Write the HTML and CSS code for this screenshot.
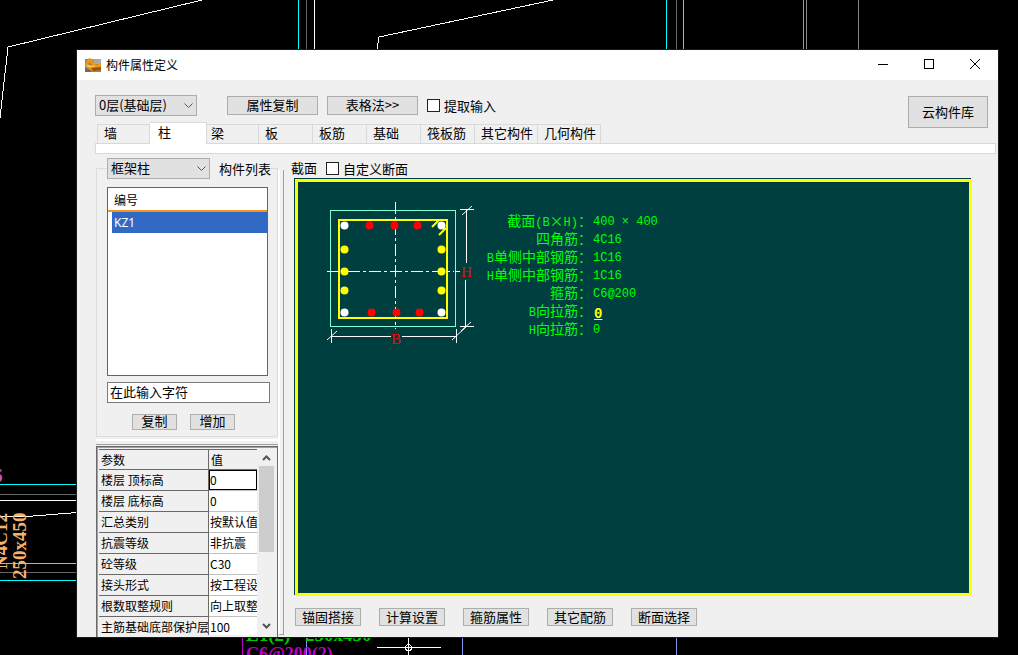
FILE: index.html
```html
<!DOCTYPE html>
<html lang="zh-CN">
<head>
<meta charset="utf-8">
<title>构件属性定义</title>
<link rel="stylesheet" href="styles.css">
</head>
<body>
<div class="desktop">
  <svg class="drawing" aria-hidden="true" shape-rendering="crispEdges" fill="none">
    <g stroke="#fff">
      <polyline points="0,118 8,47 202,0"/>
      <polyline points="377,50 379,37 553,0"/>
      <path d="M314.500 0V50M0 500.500H77M0 516.500H27L77 512.500"/>
    </g>
    <path stroke="#0ff" d="M298.500 0V50M666.500 0V50M683.500 0V50M0 484.500H77M0 563.500H77M0 580.500H77"/>
    <path stroke="#666" d="M306.500 0V50M676.500 0V50M0 494.500H77M0 572.500H77"/>
    <path stroke="#8c8486" d="M806.500 0V50M858.500 0V50"/>
    <path stroke="#7b96ee" d="M803.500 0V50M306.500 637V655M462.500 637V655M676.500 637V655"/>
    <path stroke="#c000c0" d="M242.500 637V655"/>
    <g class="cad-text">
      <text class="orange" transform="translate(7 569) rotate(-90)">N4C12</text>
      <text class="orange" transform="translate(26 579) rotate(-90)">250x450</text>
      <text class="violet" x="-7" y="482">6</text>
      <text class="green" x="246" y="641">L1(2)</text>
      <text class="green" x="305" y="641">250x450</text>
      <text class="magenta" x="246" y="660">C6@200(2)</text>
    </g>
    <path stroke="#fff" d="M377 647.500H441M408.500 637V655"/>
    <circle cx="408.500" cy="647.500" r="3" stroke="#fff"/>
  </svg>

  <main class="dialog">
    <header class="titlebar">
      <svg class="app-icon" viewBox="0 0 16 15" aria-hidden="true">
        <path fill="#85878c" d="M0 1h16v13H0z"/>
        <path fill="#aaa" d="M8 1h8v5H9z"/>
        <path fill="#6d6a68" d="M0 10l6 1v3H0z"/>
        <path fill="#f0960f" d="M4 0l3 1 2 4 2 2 5-2v7l-9 1-5-3-2-3 1-3z"/>
        <path fill="#85878c" d="M3 6l2-2 2 3-3 0z"/>
        <path fill="#9b5508" d="M6 10l10-1v3l-8 1z"/>
        <path fill="#ffd34a" d="M1 7l6 1 4-1-3 2-5 0z"/>
      </svg>
      <h1 class="title">构件属性定义</h1>
      <button class="sys" aria-label="最小化"><svg viewBox="0 0 10 10"><path d="M0 5.500h10"/></svg></button>
      <button class="sys" aria-label="最大化"><svg viewBox="0 0 10 10"><path d="M.5.5h9v9h-9z"/></svg></button>
      <button class="sys" aria-label="关闭"><svg viewBox="0 0 10 10"><path class="smooth" d="M0 0l10 10M10 0L0 10"/></svg></button>
    </header>

    <section class="top">
      <div class="top-left">
        <div class="toolbar">
          <span class="combo floor"><select aria-label="楼层"><option>0层(基础层)</option></select><svg viewBox="0 0 9 5"><path d="M.5.5l4 4 4-4"/></svg></span>
          <span class="tool-buttons">
            <button class="btn wide">属性复制</button>
            <button class="btn wide">表格法&gt;&gt;</button>
            <label class="check"><input type="checkbox">提取输入</label>
          </span>
        </div>
        <nav class="tabs" role="tablist">
          <button class="tab" role="tab">墙</button>
          <button class="tab selected" role="tab" aria-selected="true">柱</button>
          <button class="tab" role="tab">梁</button>
          <button class="tab" role="tab">板</button>
          <button class="tab" role="tab">板筋</button>
          <button class="tab" role="tab">基础</button>
          <button class="tab" role="tab">筏板筋</button>
          <button class="tab long" role="tab">其它构件</button>
          <button class="tab long" role="tab">几何构件</button>
        </nav>
      </div>
      <button class="btn cloud">云构件库</button>
    </section>
    <div class="strip"></div>

    <section class="work">
      <aside class="side">
        <fieldset class="group">
          <legend><span class="combo kind"><select aria-label="柱类型"><option>框架柱</option></select><svg viewBox="0 0 9 5"><path d="M.5.5l4 4 4-4"/></svg></span>构件列表</legend>
          <div class="list" role="listbox" aria-label="构件列表">
            <div class="list-head">编号</div>
            <div class="list-item" role="option" aria-selected="true">KZ1</div>
          </div>
          <input class="search" type="text" value="在此输入字符" aria-label="搜索">
          <div class="list-actions"><button class="btn">复制</button><button class="btn">增加</button></div>
        </fieldset>
        <div class="ridge"></div>
        <div class="params">
          <div class="params-view">
            <table>
              <thead><tr><th>参数</th><th>值</th></tr></thead>
              <tbody>
                <tr><th>楼层 顶标高</th><td class="editing"><input type="text" value="0" aria-label="楼层 顶标高"></td></tr>
                <tr><th>楼层 底标高</th><td>0</td></tr>
                <tr><th>汇总类别</th><td>按默认值</td></tr>
                <tr><th>抗震等级</th><td>非抗震</td></tr>
                <tr><th>砼等级</th><td>C30</td></tr>
                <tr><th>接头形式</th><td>按工程设</td></tr>
                <tr><th>根数取整规则</th><td>向上取整</td></tr>
                <tr><th>主筋基础底部保护层</th><td>100</td></tr>
              </tbody>
            </table>
          </div>
          <div class="scrollbar">
            <svg viewBox="0 0 9 6"><path d="M1 5l3.500-3.500L8 5"/></svg>
            <div class="thumb"></div>
            <svg viewBox="0 0 9 6"><path d="M1 1l3.500 3.500L8 1"/></svg>
          </div>
        </div>
      </aside>
      <div class="splitter"></div>

      <section class="section-pane">
        <div class="pane-head">截面<label class="check"><input type="checkbox">自定义断面</label></div>
        <div class="canvas">
          <svg class="column" viewBox="0 0 160 160" fill="none" aria-hidden="true">
            <g shape-rendering="crispEdges">
              <path stroke="#7fffd4" d="M10.500 15.500h125v116h-125z"/>
              <path stroke="#ff0" stroke-width="2" d="M19 25h108v98H19z"/>
              <path stroke="#fff" stroke-dasharray="12 3 3 3" d="M75.500 7v127M7 76.500h127"/>
              <path stroke="#fff" d="M135 76.500h5M140 14.500h14M140 131.500h14M146.500 14.500V68M145.500 85v46M11 141.500h60M82 141.500h54M11.500 134v14M136.500 134v14"/>
            </g>
            <path stroke="#fff" d="M142 20l10-9M141 136l10-9M7 145l10-9M132 145l15-14"/>
            <path stroke="#ff0" stroke-width="2" d="M112 32l7-7M119 40l7-7"/>
            <g fill="#fff"><circle cx="24.500" cy="30.500" r="4"/><circle cx="121.500" cy="30.500" r="4"/><circle cx="24.500" cy="117.500" r="4"/><circle cx="121.500" cy="117.500" r="4"/></g>
            <g fill="#ff0"><circle cx="24.500" cy="54.500" r="4"/><circle cx="24.500" cy="76.500" r="4"/><circle cx="24.500" cy="95.500" r="4"/><circle cx="121.500" cy="54.500" r="4"/><circle cx="121.500" cy="76.500" r="4"/><circle cx="121.500" cy="95.500" r="4"/></g>
            <g fill="#f00"><circle cx="49.500" cy="30.500" r="4"/><circle cx="74.500" cy="30.500" r="4"/><circle cx="97.500" cy="30.500" r="4"/><circle cx="51.500" cy="117.500" r="4"/><circle cx="76.500" cy="117.500" r="4"/><circle cx="99.500" cy="117.500" r="4"/></g>
            <text class="dim" x="141" y="82">H</text>
            <text class="dim" x="71" y="149">B</text>
          </svg>
          <dl class="rebar">
            <dt>截面<span>(B</span>×<span>H)</span>：</dt><dd>400 × 400</dd>
            <dt>四角筋：</dt><dd>4C16</dd>
            <dt><span>B</span>单侧中部钢筋：</dt><dd>1C16</dd>
            <dt><span>H</span>单侧中部钢筋：</dt><dd>1C16</dd>
            <dt>箍筋：</dt><dd>C6@200</dd>
            <dt><span>B</span>向拉筋：</dt><dd class="active">0</dd>
            <dt><span>H</span>向拉筋：</dt><dd>0</dd>
          </dl>
        </div>
        <footer class="actions">
          <button class="btn">锚固搭接</button>
          <button class="btn">计算设置</button>
          <button class="btn">箍筋属性</button>
          <button class="btn">其它配筋</button>
          <button class="btn">断面选择</button>
        </footer>
      </section>
    </section>
  </main>
</div>
</body>
</html>
```

FILE: styles.css
```css
* { box-sizing: border-box; }

body {
  margin: 0;
  background: #000;
  color: #000;
  font: 13px/18px "Noto Sans CJK SC", sans-serif;
}

button, input, select { font: inherit; color: inherit; margin: 0; }

.desktop {
  position: relative;
  display: flex;
  height: 100vh;
  padding: 50px 20px 18px 77px;
  overflow: hidden;
}

.drawing {
  position: absolute;
  inset: 0;
  width: 100%;
  height: 100%;
}

.cad-text { font: bold 19px "Liberation Serif", serif; }
.orange { fill: #f6b26b; }
.violet { fill: #c45ac4; }
.green { fill: #00c800; }
.magenta { fill: #c000c0; font-size: 18px; }

.dialog {
  position: relative;
  flex: 1;
  min-width: 0;
  display: flex;
  flex-direction: column;
  background: #f0f0f0;
  box-shadow: 0 0 0 1px #1a1a1a;
}

/* title bar */
.titlebar {
  display: flex;
  align-items: center;
  height: 30px;
  padding-left: 8px;
  background: #fff;
}
.app-icon { width: 16px; height: 15px; }
.title { flex: 1; margin: 0 0 0 5px; font-size: 12px; font-weight: 400; }
.sys {
  width: 46px;
  height: 30px;
  padding: 0 0 2px;
  border: 0;
  background: none;
}
.sys svg { display: block; width: 10px; height: 10px; margin: auto; overflow: visible; }
.sys path { fill: none; stroke: #000; shape-rendering: crispEdges; }
.sys .smooth { shape-rendering: auto; }

/* shared controls */
.btn {
  height: 19px;
  padding: 0 0 2px;
  border: 1px solid #adadad;
  background: #e1e1e1;
  line-height: 15px;
  white-space: nowrap;
}
.combo { position: relative; display: block; }
.combo select {
  display: block;
  appearance: none;
  width: 100%;
  height: 21px;
  padding: 0 3px 2px;
  border: 1px solid #adadad;
  border-radius: 0;
  background: #e1e1e1;
}
.combo svg {
  position: absolute;
  right: 4px;
  top: 8px;
  width: 9px;
  height: 5px;
  overflow: visible;
  pointer-events: none;
}
.combo path { fill: none; stroke: #555; }
.check { display: flex; align-items: center; gap: 4px; white-space: nowrap; }
.check input {
  appearance: none;
  width: 13px;
  height: 13px;
  border: 1px solid #222;
  background: #fff;
}

/* toolbar and tabs */
.top {
  display: flex;
  justify-content: space-between;
  align-items: flex-start;
  padding: 15px 10px 0 18px;
  height: 64px;
}
.toolbar { display: flex; align-items: center; gap: 30px; height: 21px; }
.tool-buttons { display: flex; align-items: center; gap: 9px; }
.floor { width: 102px; }
.wide { width: 91px; }
.cloud { width: 80px; height: 32px; margin-top: 1px; }

.tabs { position: relative; z-index: 1; display: flex; align-items: flex-end; height: 28px; padding-left: 2px; }
.tab {
  width: 54px;
  height: 20px;
  padding: 0 0 2px 6px;
  border: 1px solid #d9d9d9;
  border-width: 1px 1px 1px 0;
  background: #f0f0f0;
  line-height: 16px;
  text-align: left;
  white-space: nowrap;
}
.tab:first-child { width: 53px; border-left-width: 1px; }
.tab.selected { width: 57px; height: 22px; padding: 0 0 4px 8px; border-bottom: 0; background: #fff; }
.tab.selected + .tab { width: 52px; padding-left: 4px; }
.tab.long { width: 63px; }
.strip { height: 11px; margin: -1px 2px 0 18px; border: 1px solid #d9d9d9; background: #fff; }

/* work area */
.work { flex: 1; min-height: 0; display: flex; padding-left: 19px; }
.side { width: 182px; display: flex; flex-direction: column; padding-top: 4px; }
.group {
  min-width: 0;
  margin: 0;
  padding: 8px 7px 6px 10px;
  border: 1px solid #dcdcdc;
}
.group legend { display: flex; align-items: center; gap: 9px; padding: 0; white-space: nowrap; }
.kind { width: 103px; }
.list {
  height: 189px;
  margin-right: 2px;
  border: 1px solid #646464;
  background: #fff;
  font-size: 12px;
}
.list-head { height: 24px; padding: 3px 6px 0; border-bottom: 2px solid #f7941d; }
.list-item {
  height: 21px;
  margin-left: 4px;
  padding-left: 2px;
  background: #316ac5;
  color: #fff;
  font-family: "Noto Sans", sans-serif;
  line-height: 21px;
}
.search {
  display: block;
  width: 100%;
  height: 21px;
  margin-top: 6px;
  padding: 0 2px 3px;
  border: 1px solid #7a7a7a;
  background: #fff;
}
.list-actions { display: flex; justify-content: center; gap: 13px; padding: 11px 10px 0 0; }
.list-actions .btn { width: 45px; height: 16px; line-height: 12px; }
.ridge {
  height: 6px;
  margin: 2px 0 1px;
  border-top: 2px solid #fff;
  border-bottom: 1px solid #a0a0a0;
}

/* parameter grid */
.params {
  flex: 1;
  min-height: 0;
  display: flex;
  border: 1px solid #696969;
  border-bottom: 0;
  box-shadow: inset 1px 1px #a0a0a0;
  padding: 2px 2px 2px;
  overflow: hidden;
}
.params-view { flex: 1; min-width: 0; overflow: hidden; font-size: 12px; line-height: 18px; }
.params table { width: 100%; table-layout: fixed; border-collapse: separate; border-spacing: 0; }
.params th, .params td {
  height: 21px;
  padding: 0 0 0 2px;
  overflow: hidden;
  font-weight: 400;
  text-align: left;
  white-space: nowrap;
}
.params th { border-right: 1px solid #696969; border-bottom: 1px solid #696969; background: #f0f0f0; }
.params th:first-child { width: 110px; }
.params td { padding: 0 0 1px 1px; border-bottom: 1px solid #c0c0c0; background: #fff; }
.params thead th { border-top: 1px solid #696969; }
.params thead th + th { border-right: 0; }
.params .editing { padding: 0; }
.editing input {
  display: block;
  width: 100%;
  height: 20px;
  padding: 0 0 2px;
  border: 1px solid #000;
  border-radius: 0;
  background: #fff;
}
.scrollbar {
  width: 18px;
  display: flex;
  flex-direction: column;
  align-items: center;
  padding: 6px 1px 6px 2px;
  background: #f0f0f0;
}
.scrollbar svg { width: 9px; height: 6px; flex: none; }
.scrollbar path { fill: none; stroke: #555; stroke-width: 2; }
.thumb { width: 15px; height: 86px; margin: 5px 0 auto; background: #cdcdcd; }

.splitter {
  width: 6px;
  margin: 16px 0 2px;
  border-left: 2px solid #fff;
  border-right: 1px solid #a0a0a0;
  border-bottom: 1px solid #a0a0a0;
}

/* section preview */
.section-pane { flex: 1; min-width: 0; display: flex; flex-direction: column; padding: 3px 26px 0 7px; }
.pane-head { display: flex; align-items: center; gap: 9px; height: 22px; padding-bottom: 1px; }
.pane-head .check { padding-top: 2px; }
.canvas {
  flex: 1;
  min-height: 0;
  display: flex;
  align-items: flex-start;
  margin-left: 4px;
  padding: 13px 22px;
  border: 3px solid #ff0;
  box-shadow: -1px -1px #003f3f;
  background: #003f3f;
}
.column { width: 160px; height: 160px; flex: none; }
.dim { fill: #f00; font: 15px "Liberation Serif", serif; }
.rebar {
  display: grid;
  grid-template-columns: 112px auto;
  grid-auto-rows: 18px;
  column-gap: 1px;
  margin: 16px 0 0;
  color: #0f0;
  font-size: 14px;
  line-height: 18px;
}
.rebar dt { text-align: right; white-space: nowrap; }
.rebar dd, .rebar span { font-family: "Liberation Mono", monospace; font-size: 12px; }
.rebar dd { margin: 0; padding-top: 2px; }
.rebar .active {
  padding: 4px 0 0 1px;
  color: #ff0;
  font-size: 14px;
  font-weight: 700;
  text-decoration: underline;
}
.actions { display: flex; gap: 18px; padding: 12px 0 11px 4px; }
.actions .btn { width: 66px; height: 18px; }
```
